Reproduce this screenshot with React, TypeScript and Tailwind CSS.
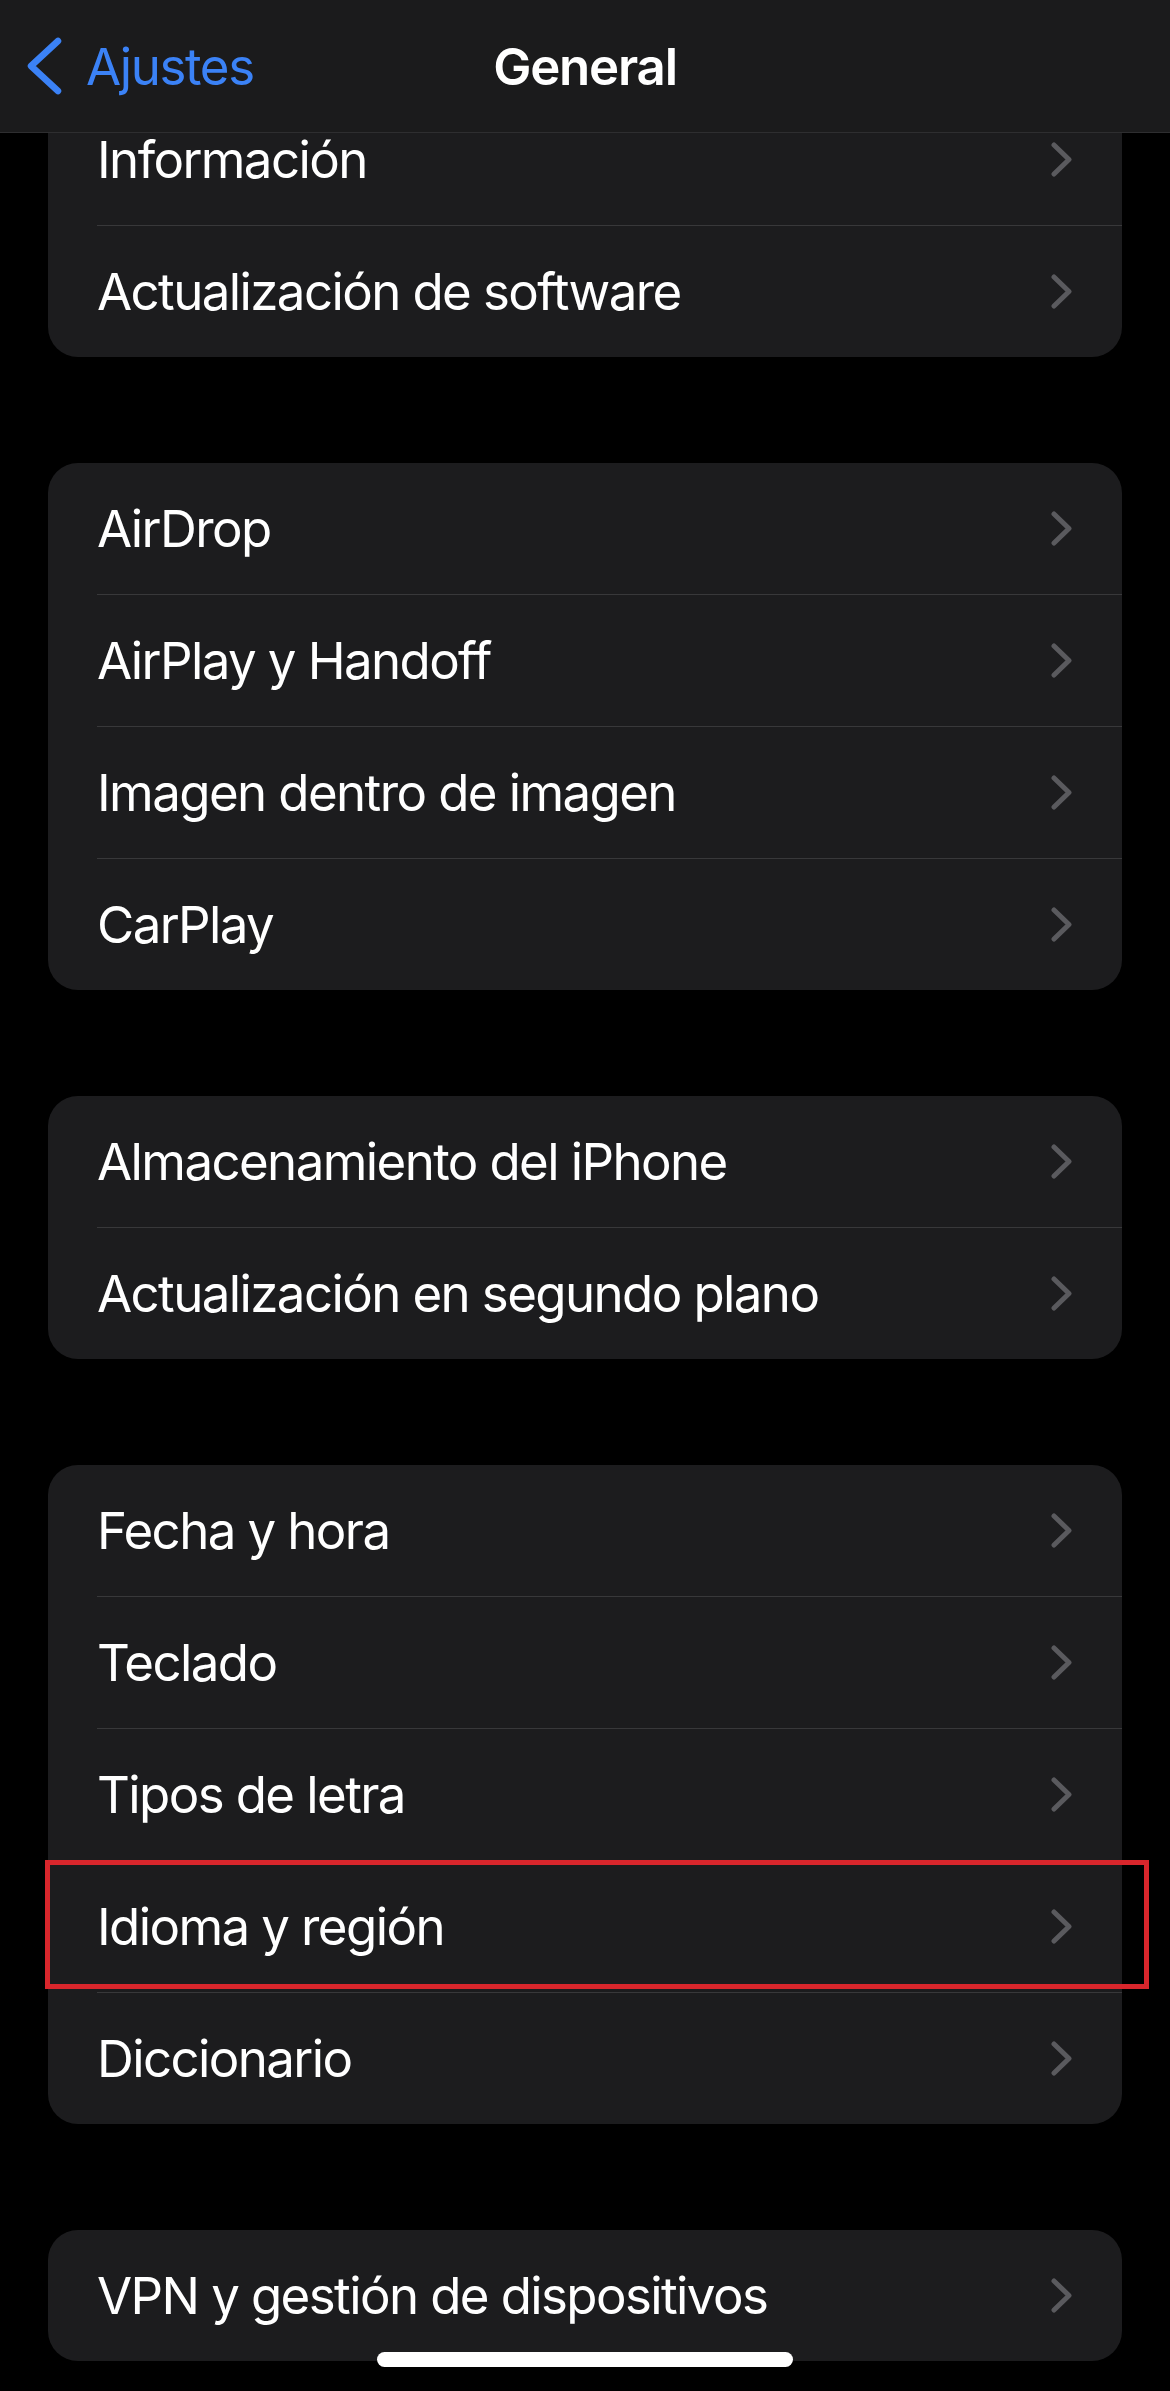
import React from "react";

const FONT = { fontFamily: 'Inter, "Noto Sans", "Liberation Sans", sans-serif' };

function Chevron() {
  return (
    <svg width="21" height="35" viewBox="0 0 21 35" fill="none" className="shrink-0">
      <path d="M3 3 L18 17.5 L3 32" stroke="#5a5a5e" strokeWidth="5" strokeLinecap="round" strokeLinejoin="round" />
    </svg>
  );
}

type RowProps = { label: string; highlighted?: boolean };

function Row({ label, highlighted }: RowProps) {
  return (
    <div className="relative flex h-[131px] items-center justify-between pl-[49px] pr-[50px]">
      <span className="text-[51px] leading-none text-white tracking-[-1.6px]">{label}</span>
      <Chevron />
      {highlighted && (
        <div className="pointer-events-none absolute left-[-3px] top-[-1px] h-[129px] w-[1104px] border-[5px] border-[#d9262c]" />
      )}
    </div>
  );
}

function Group({ items, highlight }: { items: string[]; highlight?: string }) {
  return (
    <div className="rounded-[30px] bg-[#1c1c1e]">
      {items.map((label, i) => (
        <React.Fragment key={label}>
          {i > 0 && <div className="ml-[49px] h-px bg-[#38383a]" />}
          <Row label={label} highlighted={label === highlight} />
        </React.Fragment>
      ))}
    </div>
  );
}

export default function App() {
  const groups: string[][] = [
    ["Información", "Actualización de software"],
    ["AirDrop", "AirPlay y Handoff", "Imagen dentro de imagen", "CarPlay"],
    ["Almacenamiento del iPhone", "Actualización en segundo plano"],
    ["Fecha y hora", "Teclado", "Tipos de letra", "Idioma y región", "Diccionario"],
    ["VPN y gestión de dispositivos"],
  ];
  return (
    <div className="relative h-[2391px] w-[1170px] overflow-hidden bg-black" style={FONT}>
      <div className="flex flex-col gap-[106px] px-[48px] pt-[94px]">
        {groups.map((g, i) => (
          <Group key={i} items={g} highlight="Idioma y región" />
        ))}
      </div>

      <div className="absolute left-0 right-0 top-0 grid h-[133px] grid-cols-[1fr_auto_1fr] items-center border-b border-[#2e2e30] bg-[#1b1b1c]">
        <div className="flex items-center pl-[27px]">
          <svg width="36" height="58" viewBox="0 0 36 58" fill="none">
            <path d="M31 4 L4 29 L31 54" stroke="#3b82f6" strokeWidth="6.5" strokeLinecap="round" strokeLinejoin="round" />
          </svg>
          <span className="ml-[23px] text-[51px] leading-none text-[#3b82f6] tracking-[-1.4px]">Ajustes</span>
        </div>
        <span className="text-[51px] font-semibold leading-none text-white tracking-[-1.2px]">General</span>
        <div />
      </div>

      <div className="absolute bottom-[24px] left-1/2 h-[15px] w-[416px] -translate-x-1/2 rounded-full bg-white" />
    </div>
  );
}
